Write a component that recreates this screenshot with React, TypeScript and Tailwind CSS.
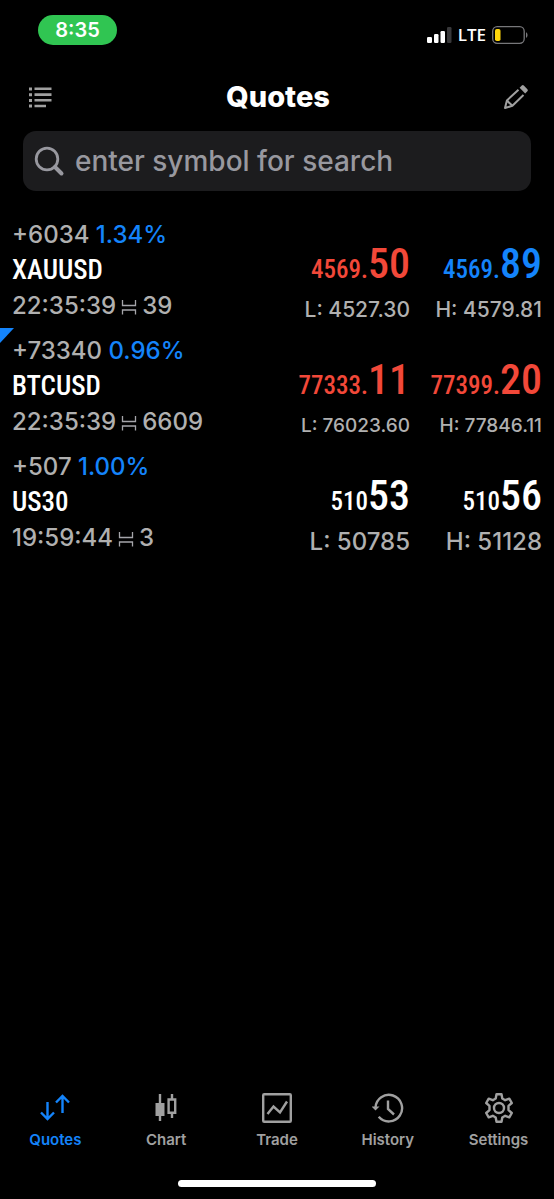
import { useState } from 'react';
import type { ReactNode } from 'react';

type Tone = 'up' | 'down' | 'flat';

interface Price {
  lead: string;
  big: string;
  tone: Tone;
}

interface Quote {
  symbol: string;
  change: string;
  percent: string;
  time: string;
  spread: string;
  bid: Price;
  ask: Price;
  low: string;
  high: string;
  rangeSize: string;
  marked?: boolean;
}

const quotes: Quote[] = [
  {
    symbol: 'XAUUSD',
    change: '+6034',
    percent: '1.34%',
    time: '22:35:39',
    spread: '39',
    bid: { lead: '4569.', big: '50', tone: 'down' },
    ask: { lead: '4569.', big: '89', tone: 'up' },
    low: '4527.30',
    high: '4579.81',
    rangeSize: 'text-[21px]',
  },
  {
    symbol: 'BTCUSD',
    change: '+73340',
    percent: '0.96%',
    time: '22:35:39',
    spread: '6609',
    bid: { lead: '77333.', big: '11', tone: 'down' },
    ask: { lead: '77399.', big: '20', tone: 'down' },
    low: '76023.60',
    high: '77846.11',
    rangeSize: 'text-[19px]',
    marked: true,
  },
  {
    symbol: 'US30',
    change: '+507',
    percent: '1.00%',
    time: '19:59:44',
    spread: '3',
    bid: { lead: '510', big: '53', tone: 'flat' },
    ask: { lead: '510', big: '56', tone: 'flat' },
    low: '50785',
    high: '51128',
    rangeSize: 'text-[24px]',
  },
];

const tones: Record<Tone, string> = {
  up: 'text-[#1484fb]',
  down: 'text-[#f24839]',
  flat: 'text-white',
};

const narrow = "font-['Roboto_Condensed',Roboto,sans-serif] font-medium";

function SpreadIcon() {
  return (
    <svg width="16" height="18" viewBox="0 0 16 18" fill="none" stroke="#a5a5aa" strokeWidth="1.3" aria-hidden="true">
      <path d="M1.500 3v5.500h13V3M1.500 17.500v-4.500h13v4.500" />
    </svg>
  );
}

function PriceCell({ price, label, value, size }: { price: Price; label: string; value: string; size: string }) {
  return (
    <div className="w-[132px] shrink-0 flex flex-col items-end justify-end whitespace-nowrap">
      <div className={`${narrow} ${tones[price.tone]} flex items-baseline leading-[44px]`}>
        <span className="text-[25px]">{price.lead}</span>
        <span className="text-[42px]">{price.big}</span>
      </div>
      <div className={`${size} h-8 leading-[36px] font-medium text-[#b0b0b0]`}>
        {label}: {value}
      </div>
    </div>
  );
}

function QuoteRow({ quote }: { quote: Quote }) {
  return (
    <li className="relative flex px-3 pt-1.5 pb-1">
      {quote.marked && (
        <svg className="absolute left-0 top-0" width="14" height="15" viewBox="0 0 14 15" aria-hidden="true">
          <path d="M0 0h14L0 15z" fill="#1484fb" />
        </svg>
      )}
      <div className="flex-1 min-w-0 whitespace-nowrap text-[24px] font-medium text-[#b0b0b0]">
        <p className="leading-[34px]">
          {quote.change} <span className="text-[#1484fb]">{quote.percent}</span>
        </p>
        <h2 className={`${narrow} text-[27px] leading-[36px] text-white`}>{quote.symbol}</h2>
        <p className="flex items-center gap-[5px] leading-[36px]">
          <span>{quote.time}</span>
          <SpreadIcon />
          <span>{quote.spread}</span>
        </p>
      </div>
      <PriceCell price={quote.bid} label="L" value={quote.low} size={quote.rangeSize} />
      <PriceCell price={quote.ask} label="H" value={quote.high} size={quote.rangeSize} />
    </li>
  );
}

function NavIcon({ children }: { children: ReactNode }) {
  return (
    <svg width="32" height="32" viewBox="0 0 32 32" fill="none" stroke="currentColor" strokeWidth="2.4" aria-hidden="true">
      {children}
    </svg>
  );
}

const tabs = [
  {
    name: 'Quotes',
    icon: (
      <NavIcon>
        <path d="M8.500 10v17M2 20.500l6.500 6.500 6.500-6.500M23.500 21V4M17 10.500L23.500 4l6.500 6.500" />
      </NavIcon>
    ),
  },
  {
    name: 'Chart',
    icon: (
      <NavIcon>
        <path d="M10 2v27M22 2v5M22 21v5" />
        <path d="M5.500 11h9v13h-9z" fill="currentColor" stroke="none" />
        <path d="M18.600 7.500h6.600v13.200h-6.600z" />
      </NavIcon>
    ),
  },
  {
    name: 'Trade',
    icon: (
      <NavIcon>
        <rect x="2.200" y="2.200" width="27.600" height="27.600" rx="1" />
        <path d="M6.500 22l6-7.500 6.500 6L26 9.500" />
      </NavIcon>
    ),
  },
  {
    name: 'History',
    icon: (
      <NavIcon>
        <path d="M3.500 15.500A13.300 13.300 0 1 1 6.700 24.800" />
        <path d="M-.5 14.500h8L3.500 18.500z" fill="currentColor" stroke="none" />
        <path d="M16 8.500v8.500l6 5.500" />
      </NavIcon>
    ),
  },
  {
    name: 'Settings',
    icon: (
      <NavIcon>
        <circle cx="16" cy="16" r="5" />
        <path
          d="M13.500 2.200h5l.8 4.300 2.900 1.700 4.100-1.500 2.500 4.300-3.300 2.900v4.200l3.300 2.900-2.500 4.300-4.100-1.500-2.900 1.700-.8 4.300h-5l-.8-4.300-2.900-1.700-4.100 1.500L3.200 21l3.300-2.900v-4.200L3.200 11l2.500-4.300 4.100 1.500 2.900-1.700z"
          strokeLinejoin="round"
        />
      </NavIcon>
    ),
  },
];

function StatusBar() {
  return (
    <div className="flex items-start justify-between pt-[15px] pl-[38px] pr-[26px] text-white font-semibold">
      <div className="w-[79px] h-[30px] rounded-full bg-[#30c552] text-center text-[20px] leading-[30px]">8:35</div>
      <div className="flex items-center gap-1.5 h-10">
        <svg width="25" height="16" viewBox="0 0 25 16" fill="#fff" aria-hidden="true">
          <rect x="0" y="10" width="5" height="6" rx="1.200" />
          <rect x="7" y="7" width="4.500" height="9" rx="1.200" />
          <rect x="13.500" y="4" width="4.500" height="12" rx="1.200" />
          <rect x="20" y="0" width="4.500" height="16" rx="1.200" fill="#38383a" />
        </svg>
        <span className="font-['Open_Sans',sans-serif] text-[17px] leading-5">LTE</span>
        <svg width="36" height="18" viewBox="0 0 36 18" fill="none" aria-hidden="true">
          <rect x="0.700" y="0.700" width="31.500" height="16.600" rx="4.500" stroke="#77777a" strokeWidth="1.300" />
          <rect x="3" y="3" width="5.500" height="12" rx="1.800" fill="#ffd60a" />
          <path d="M34 6.200c2 .8 2 4.800 0 5.600z" fill="#77777a" />
        </svg>
      </div>
    </div>
  );
}

export default function App() {
  const [search, setSearch] = useState('');
  const [activeTab, setActiveTab] = useState('Quotes');

  const visible = quotes.filter(q => q.symbol.toLowerCase().includes(search.toLowerCase()));

  return (
    <div className="min-h-screen flex flex-col bg-black font-[Inter,sans-serif]">
      <StatusBar />

      <header className="flex items-center justify-between pl-[26px] pr-6 pt-[22px] text-[#a0a0a0]">
        <button type="button" aria-label="Symbol list" className="cursor-pointer">
          <svg width="28" height="28" viewBox="0 0 28 28" fill="currentColor" aria-hidden="true">
            <path d="M3 4.500h3v3H3zM3 10.200h3v3H3zM3 15.900h3v3H3zM3 21.500h3v3H3zM8.500 4.500h17v2.600h-17zM8.500 10.300h17v2.600h-17zM8.500 16h17v2.600h-17zM8.500 21.700H20v2.600H8.500z" />
          </svg>
        </button>
        <h1 className="text-[29px] leading-10 font-extrabold text-white">Quotes</h1>
        <button type="button" aria-label="Edit" className="cursor-pointer">
          <svg width="28" height="28" viewBox="0 0 28 28" fill="none" stroke="currentColor" strokeWidth="2" aria-hidden="true">
            <path d="M16.500 6.800L4.900 17.500 3 25l7.400-2.200L21.500 12M4.900 17.500l5.500 5.300" strokeLinejoin="round" />
            <path d="M17.600 4.800l2.200-2.200q1-1 2 0l3.600 3.600q1 1 0 2l-2.200 2.200z" fill="currentColor" stroke="none" />
          </svg>
        </button>
      </header>

      <div className="px-[23px] pt-[14px]">
        <label className="flex items-center gap-2.5 h-[60px] px-[11px] rounded-[13px] bg-[#1c1c1e]">
          <svg className="shrink-0" width="31" height="31" viewBox="0 0 31 31" fill="none" stroke="#98989f" aria-hidden="true">
            <circle cx="13" cy="13" r="10.800" strokeWidth="2.800" />
            <path d="M21 21l6.500 6.500" strokeWidth="4" strokeLinecap="round" />
          </svg>
          <input
            type="text"
            placeholder="enter symbol for search"
            value={search}
            onChange={e => setSearch(e.target.value)}
            className="flex-1 min-w-0 bg-transparent text-[28px] leading-9 font-medium text-white placeholder:text-[#98989f] outline-none"
            aria-label="enter symbol for search"
          />
        </label>
      </div>

      <ul className="flex-1 pt-[21px]">
        {visible.map(quote => (
          <QuoteRow key={quote.symbol} quote={quote} />
        ))}
      </ul>

      <nav className="grid grid-cols-5 pb-[30px]">
        {tabs.map(tab => (
          <button
            key={tab.name}
            type="button"
            onClick={() => setActiveTab(tab.name)}
            className={`flex flex-col items-center gap-1.5 text-[15px] leading-5 font-semibold cursor-pointer ${activeTab === tab.name ? 'text-[#1484fb]' : 'text-[#a0a0a0]'}`}
          >
            {tab.icon}
            {tab.name}
          </button>
        ))}
      </nav>
      <div className="w-[198px] h-[7px] mx-auto mb-3 rounded-full bg-white" />
    </div>
  );
}
